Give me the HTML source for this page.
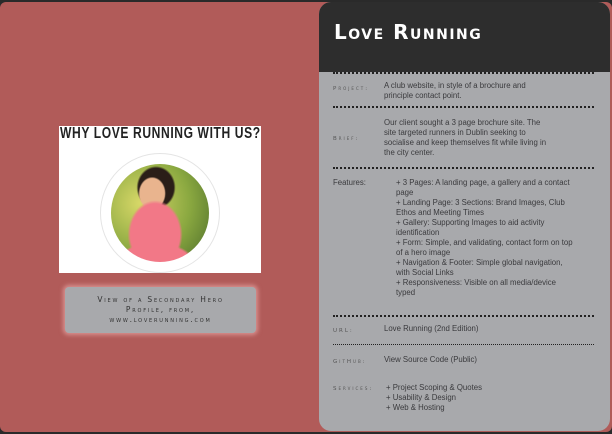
<!DOCTYPE html>
<html><head><style>
*{margin:0;padding:0;box-sizing:border-box}
body{width:612px;height:434px;background:#2a2a2a;font-family:"Liberation Sans",sans-serif;overflow:hidden;position:relative}
.bg{position:absolute;left:0;top:2px;width:612px;height:430px;background:#b15b59;border-radius:6px}
.panel{position:absolute;left:319px;top:2px;width:291px;height:429px;background:#a8a9ac;border-radius:12px;overflow:hidden}
.hd{height:70px;background:#2d2d2d;color:#fff;font-weight:bold;font-size:20px;padding:18px 0 0 15px;letter-spacing:1.5px;font-variant:small-caps;font-family:"DejaVu Sans",sans-serif}
.row{position:absolute;left:14px;font-size:7.8px;color:#3a3a3d;line-height:10px}
.lab{position:absolute;left:0;font-size:5.5px;letter-spacing:2px;color:#555;font-variant:small-caps;font-family:"DejaVu Sans",sans-serif}
.txt{position:absolute;left:51px;width:170px}
.sep{position:absolute;left:14px;width:261px;border-top:2px dotted #222}
.hero{position:absolute;left:59px;top:126px;width:202px;height:147px;background:#fff}
.hero h2{position:absolute;left:1px;top:0;font-family:"Liberation Sans",sans-serif;font-size:16px;color:#222;letter-spacing:0.8px;line-height:16px;font-weight:bold;white-space:nowrap;transform:scaleX(.755);transform-origin:left top}
.ring{position:absolute;left:41px;top:27px;width:120px;height:120px;border-radius:50%;border:1px solid #e4e4e4}
.pic{position:absolute;left:10px;top:10px;width:98px;height:98px;border-radius:50%;background:
radial-gradient(ellipse 28% 35% at 45% 72%,#f27887 0 90%,transparent 100%),
radial-gradient(ellipse 40% 20% at 45% 100%,#f27887 0 90%,transparent 100%),
radial-gradient(ellipse 14% 17% at 42% 30%,#e9b48e 0 90%,transparent 100%),
radial-gradient(ellipse 20% 22% at 46% 24%,#2a1e18 0 90%,transparent 100%),
radial-gradient(circle at 30% 40%,#d8d868,#8aa840 55%,#4a6a2a)}
.cap{position:absolute;left:65px;top:287px;width:191px;height:46px;background:#a8a9ac;border-radius:4px;box-shadow:0 0 4px 2px rgba(255,200,200,.5);font-size:7.5px;color:#333;text-align:center;letter-spacing:1.8px;line-height:10px;padding-top:8px;font-variant:small-caps;font-family:"DejaVu Sans",sans-serif}
</style></head><body>
<div class="bg"></div>
<div class="hero"><h2>WHY LOVE RUNNING WITH US?</h2><div class="ring"><div class="pic"></div></div></div>
<div class="cap">View of a Secondary Hero<br>Profile, from,<br>www.loverunning.com</div>
<div class="panel">
<div class="hd">Love Running</div>
<div class="sep" style="top:70px"></div>
<div class="row" style="top:79px"><span class="lab" style="top:3px">Project:</span><div class="txt">A club website, in style of a brochure and principle contact point.</div></div>
<div class="sep" style="top:104px"></div>
<div class="row" style="top:116px"><span class="lab" style="top:16px">Brief:</span><div class="txt">Our client sought a 3 page brochure site. The site targeted runners in Dublin seeking to socialise and keep themselves fit while living in the city center.</div></div>
<div class="sep" style="top:165px"></div>
<div class="row" style="top:176px"><span style="position:absolute;left:0">Features:</span><div class="txt" style="left:63px;width:178px">+ 3 Pages: A landing page, a gallery and a contact page<br>+ Landing Page: 3 Sections: Brand Images, Club Ethos and Meeting Times<br>+ Gallery: Supporting Images to aid activity identification<br>+ Form: Simple, and validating, contact form on top of a hero image<br>+ Navigation &amp; Footer: Simple global navigation, with Social Links<br>+ Responsiveness: Visible on all media/device typed</div></div>
<div class="sep" style="top:313px"></div>
<div class="row" style="top:322px"><span class="lab" style="top:2px">URL:</span><div class="txt">Love Running (2nd Edition)</div></div>
<div class="sep" style="top:342px;border-top-width:1px"></div>
<div class="row" style="top:353px"><span class="lab" style="top:2px">GitHub:</span><div class="txt">View Source Code (Public)</div></div>
<div class="row" style="top:381px"><span class="lab" style="top:1px">Services:</span><div class="txt" style="left:53px">+ Project Scoping &amp; Quotes<br>+ Usability &amp; Design<br>+ Web &amp; Hosting</div></div>
</div>
</body></html>
